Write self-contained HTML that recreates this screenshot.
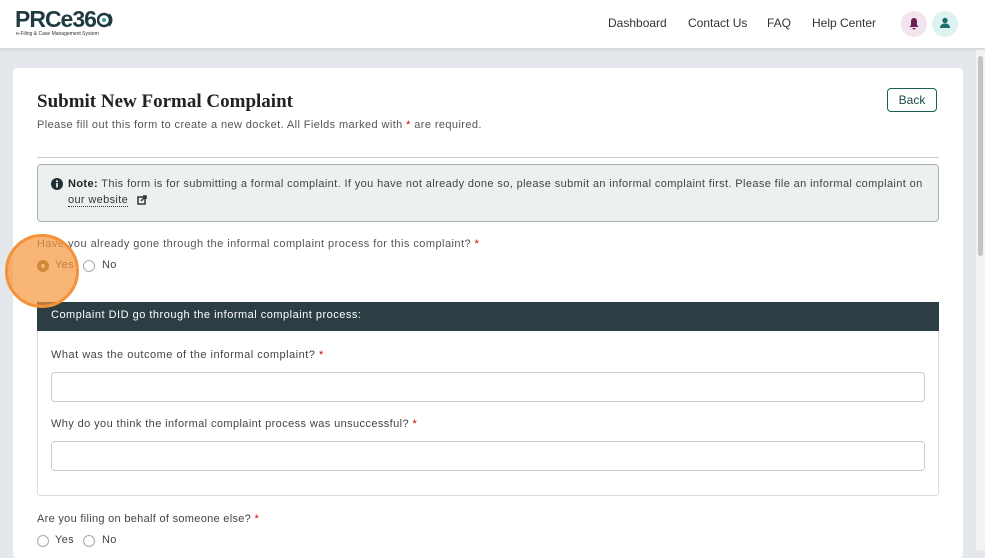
<!DOCTYPE html>
<html><head><style>
*{box-sizing:border-box;margin:0;padding:0}
body{width:985px;height:550px;overflow:hidden;background:#e4e8ec;font-family:"Liberation Sans",sans-serif;position:relative;color:#444}
.a{position:absolute}
.hdr{left:0;top:0;width:985px;height:48px;background:#fff;box-shadow:0 1px 4px rgba(0,0,0,.12)}
.nav{font-size:12px;color:#333;top:16px}
.card{left:13px;top:68px;width:950px;height:490px;background:#fff;border-radius:4px}
.t{font-size:12px;letter-spacing:0.35px}
.radio{width:12px;height:12px;border:1px solid #aaa;border-radius:50%;background:#fff}
.inp{height:30px;border:1px solid #ccc;border-radius:4px;background:#fff}
.req{color:#c00}
</style></head><body>
<div class="a hdr"></div>
<div class="a" style="left:15px;top:6px;font-size:23px;font-weight:bold;color:#1f3a40;letter-spacing:-1px">PRCe36</div>
<svg class="a" style="left:97px;top:11px" width="16" height="18"><circle cx="7" cy="9" r="6" fill="none" stroke="#1f3a40" stroke-width="2.5"/><circle cx="7" cy="9" r="2" fill="#3aa0a0"/><path d="M12 3 A8 8 0 0 1 12 15" fill="none" stroke="#1f3a40" stroke-width="1.5"/></svg>
<div class="a" style="left:16px;top:31px;font-size:5px;color:#333">e-Filing &amp; Case Management System</div>
<div class="a nav" style="left:608px">Dashboard</div>
<div class="a nav" style="left:688px">Contact Us</div>
<div class="a nav" style="left:767px">FAQ</div>
<div class="a nav" style="left:812px">Help Center</div>
<div class="a" style="left:901px;top:11px;width:26px;height:26px;border-radius:50%;background:#f2e4ee"></div>
<svg class="a" style="left:908px;top:17px" width="12" height="13"><path d="M6 1C3.5 1 3 3 3 5v3L1.5 10h9L9 8V5C9 3 8.5 1 6 1z M4.5 11a1.5 1.5 0 0 0 3 0z" fill="#6b1f55"/></svg>
<div class="a" style="left:932px;top:11px;width:26px;height:26px;border-radius:50%;background:#dff2f2"></div>
<svg class="a" style="left:939px;top:17px" width="12" height="12"><circle cx="6" cy="3.5" r="2.7" fill="#1b6f6a"/><path d="M1 11c0-3 2-4.5 5-4.5s5 1.5 5 4.5z" fill="#1b6f6a"/></svg>
<div class="a" style="left:976px;top:50px;width:9px;height:500px;background:#f3f3f3"></div>
<div class="a" style="left:978px;top:56px;width:5px;height:200px;background:#c4c4c4;border-radius:3px"></div>
<div class="a card"></div>
<div class="a" style="left:37px;top:91px;font-family:'Liberation Serif',serif;font-weight:bold;font-size:19px;color:#222">Submit New Formal Complaint</div>
<div class="a t" style="left:37px;top:119px;font-size:11px;color:#555;letter-spacing:0.4px">Please fill out this form to create a new docket. All Fields marked with <span class="req">*</span> are required.</div>
<div class="a" style="left:887px;top:88px;width:50px;height:24px;border:1px solid #1b5a55;border-radius:4px;font-size:12px;color:#1b4a45;text-align:center;line-height:22px">Back</div>
<div class="a" style="left:37px;top:157px;width:902px;height:1px;background:#ccc"></div>
<div class="a" style="left:37px;top:164px;width:902px;height:58px;background:#edf0f1;border:1px solid #a9b0b3;border-radius:4px"></div>
<svg class="a" style="left:51px;top:178px" width="12" height="12"><circle cx="6" cy="6" r="6" fill="#1e3035"/><rect x="5.2" y="5" width="1.6" height="4.5" fill="#fff"/><circle cx="6" cy="3.2" r="1" fill="#fff"/></svg>
<div class="a t" style="left:68px;top:178px;font-size:11px;color:#444;letter-spacing:0.38px;white-space:nowrap"><b style="color:#222">Note:</b> This form is for submitting a formal complaint. If you have not already done so, please submit an informal complaint first. Please file an informal complaint on</div>
<div class="a t" style="left:68px;top:194px;font-size:11px;color:#333;border-bottom:1px dotted #333">our website</div>
<svg class="a" style="left:137px;top:195px" width="10" height="10"><rect x="1" y="2" width="7" height="7" fill="none" stroke="#333" stroke-width="1.5"/><path d="M4 6L9 1M6 1h3v3" stroke="#333" stroke-width="1.5" fill="none"/></svg>
<div class="a t" style="left:37px;top:238px;font-size:11px;color:#555;letter-spacing:0.45px">Have you already gone through the informal complaint process for this complaint? <span class="req">*</span></div>
<div class="a radio" style="left:37px;top:260px;border:4px solid #7a6a35"></div>
<div class="a t" style="left:55px;top:259px;font-size:11px">Yes</div>
<div class="a radio" style="left:83px;top:260px"></div>
<div class="a t" style="left:102px;top:259px;font-size:11px">No</div>
<div class="a" style="left:37px;top:302px;width:902px;height:194px;border:1px solid #ddd;border-radius:3px"></div>
<div class="a" style="left:37px;top:302px;width:902px;height:29px;background:#2c3e44"></div>
<div class="a t" style="left:51px;top:309px;font-size:11px;color:#fff;letter-spacing:0.5px">Complaint DID go through the informal complaint process:</div>
<div class="a t" style="left:51px;top:349px;font-size:11px;color:#444;letter-spacing:0.5px">What was the outcome of the informal complaint? <span class="req">*</span></div>
<div class="a inp" style="left:51px;top:372px;width:874px"></div>
<div class="a t" style="left:51px;top:418px;font-size:11px;color:#444;letter-spacing:0.4px">Why do you think the informal complaint process was unsuccessful? <span class="req">*</span></div>
<div class="a inp" style="left:51px;top:441px;width:874px"></div>
<div class="a t" style="left:37px;top:513px;font-size:11px;color:#444;letter-spacing:0.3px">Are you filing on behalf of someone else? <span class="req">*</span></div>
<div class="a radio" style="left:37px;top:535px"></div>
<div class="a t" style="left:55px;top:534px;font-size:11px">Yes</div>
<div class="a radio" style="left:83px;top:535px"></div>
<div class="a t" style="left:102px;top:534px;font-size:11px">No</div>
<div class="a" style="left:5px;top:234px;width:74px;height:74px;border-radius:50%;background:rgba(247,150,60,.7);border:3px solid #f39238"></div>
</body></html>
